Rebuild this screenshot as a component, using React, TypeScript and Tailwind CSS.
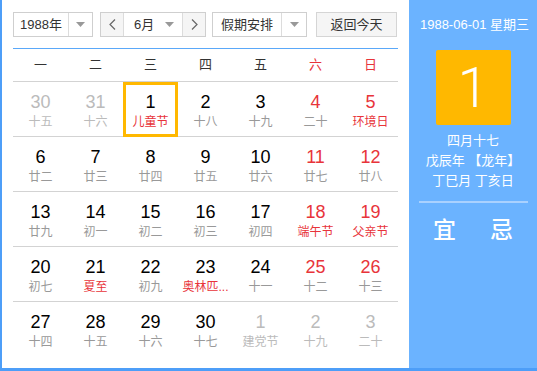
import React from 'react';

type Day = {
  n: number;
  lunar: string;
  other?: boolean;
  fest?: boolean;
  selected?: boolean;
};

const weeks: Day[][] = [
  [
    { n: 30, lunar: '十五', other: true },
    { n: 31, lunar: '十六', other: true },
    { n: 1, lunar: '儿童节', fest: true, selected: true },
    { n: 2, lunar: '十八' },
    { n: 3, lunar: '十九' },
    { n: 4, lunar: '二十' },
    { n: 5, lunar: '环境日', fest: true },
  ],
  [
    { n: 6, lunar: '廿二' },
    { n: 7, lunar: '廿三' },
    { n: 8, lunar: '廿四' },
    { n: 9, lunar: '廿五' },
    { n: 10, lunar: '廿六' },
    { n: 11, lunar: '廿七' },
    { n: 12, lunar: '廿八' },
  ],
  [
    { n: 13, lunar: '廿九' },
    { n: 14, lunar: '初一' },
    { n: 15, lunar: '初二' },
    { n: 16, lunar: '初三' },
    { n: 17, lunar: '初四' },
    { n: 18, lunar: '端午节', fest: true },
    { n: 19, lunar: '父亲节', fest: true },
  ],
  [
    { n: 20, lunar: '初七' },
    { n: 21, lunar: '夏至', fest: true },
    { n: 22, lunar: '初九' },
    { n: 23, lunar: '奥林匹...', fest: true },
    { n: 24, lunar: '十一' },
    { n: 25, lunar: '十二' },
    { n: 26, lunar: '十三' },
  ],
  [
    { n: 27, lunar: '十四' },
    { n: 28, lunar: '十五' },
    { n: 29, lunar: '十六' },
    { n: 30, lunar: '十七' },
    { n: 1, lunar: '建党节', other: true },
    { n: 2, lunar: '十九', other: true },
    { n: 3, lunar: '二十', other: true },
  ],
];

const weekdays = ['一', '二', '三', '四', '五', '六', '日'];

function Caret() {
  return (
    <svg width="9" height="5" viewBox="0 0 9 5">
      <path d="M0 0h9L4.5 5z" fill="#999" />
    </svg>
  );
}

export default function App() {
  return (
    <div
      className="flex h-[371px] w-[537px] border-b-[3px] border-l-2 border-[#4d9ef8] bg-white"
      style={{ fontFamily: '"Liberation Sans", "Noto Sans CJK SC", sans-serif' }}
    >
      <div className="w-[407px] px-[11px] pt-[12px]">
        {/* toolbar */}
        <div className="flex h-[25px] text-[13px] text-[#333]">
          <div className="flex w-[80px] border border-[#cfcfcf]">
            <div className="flex flex-1 items-center justify-center">1988年</div>
            <div className="flex w-[24px] items-center justify-center border-l border-[#dcdcdc]">
              <Caret />
            </div>
          </div>
          <div className="ml-[7px] flex w-[106px] border border-[#cfcfcf]">
            <div className="flex w-[22px] items-center justify-center bg-[#f5f5f5] text-[#666]">
              <svg width="7" height="11" viewBox="0 0 7 11">
                <path d="M6 0.5L1 5.5l5 5" stroke="#666" strokeWidth="1.2" fill="none" />
              </svg>
            </div>
            <div className="flex flex-1 items-center border-x border-[#dcdcdc] pl-[10px] pr-[8px]">
              <span className="flex-1">6月</span>
              <Caret />
            </div>
            <div className="flex w-[22px] items-center justify-center bg-[#f5f5f5]">
              <svg width="7" height="11" viewBox="0 0 7 11">
                <path d="M1 0.5l5 5-5 5" stroke="#666" strokeWidth="1.2" fill="none" />
              </svg>
            </div>
          </div>
          <div className="ml-[6px] flex w-[95px] border border-[#cfcfcf]">
            <div className="flex flex-1 items-center justify-center">假期安排</div>
            <div className="flex w-[25px] items-center justify-center border-l border-[#dcdcdc]">
              <Caret />
            </div>
          </div>
          <div className="ml-[9px] flex w-[81px] items-center justify-center border border-[#d5d5d5] bg-[#f5f5f5]">
            返回今天
          </div>
        </div>

        <div className="mt-[11px] border-t border-[#5aa8f9]" />

        {/* weekday header */}
        <div className="grid h-[33px] grid-cols-7 border-b border-[#d3d3d3] text-[13px]">
          {weekdays.map((w, i) => (
            <div
              key={w}
              className={`flex items-center justify-center ${i >= 5 ? 'text-[#e8343a]' : 'text-[#333]'}`}
            >
              {w}
            </div>
          ))}
        </div>

        {/* days */}
        {weeks.map((week, wi) => (
          <div
            key={wi}
            className={`grid h-[55px] grid-cols-7 ${wi < weeks.length - 1 ? 'border-b border-[#d3d3d3]' : ''}`}
          >
            {week.map((d, di) => {
              const weekend = di >= 5;
              const numColor = d.other ? 'text-[#bbbbbb]' : weekend ? 'text-[#e8343a]' : 'text-black';
              const lunarColor = d.other ? 'text-[#bbbbbb]' : d.fest ? 'text-[#e8343a]' : 'text-[#999999]';
              return (
                <div key={di} className="relative flex flex-col items-center pt-[10px]">
                  <div className={`text-[18px] leading-[20px] ${numColor}`}>{d.n}</div>
                  <div className={`mt-[2px] whitespace-nowrap text-[12px] leading-[16px] ${lunarColor}`}>
                    {d.lunar}
                  </div>
                  {d.selected && (
                    <div className="absolute -bottom-px left-0 right-0 top-0 border-[3px] border-[#ffb800]" />
                  )}
                </div>
              );
            })}
          </div>
        ))}
      </div>

      {/* side panel */}
      <div className="flex flex-1 flex-col items-center bg-[#6bb3ff] pt-[16px] text-white">
        <div className="pl-[3px] text-[13px] leading-[18px]">1988-06-01 星期三</div>
        <div className="mt-[16px] flex h-[75px] w-[75px] items-center justify-center rounded-[2px] bg-[#ffb800] font-['Roboto'] text-[56px] font-light leading-none">
          1
        </div>
        <div className="mt-[6px] text-[13px] leading-[20px]">四月十七</div>
        <div className="text-[13px] leading-[20px]">戊辰年 【龙年】</div>
        <div className="text-[13px] leading-[20px]">丁巳月 丁亥日</div>
        <div className="mt-[10px] h-[2px] w-[109px] bg-[#a9d1ff]" />
        <div className="mt-[13px] flex gap-[34px] text-[23px] font-medium leading-[28px]">
          <span>宜</span>
          <span>忌</span>
        </div>
      </div>
    </div>
  );
}
